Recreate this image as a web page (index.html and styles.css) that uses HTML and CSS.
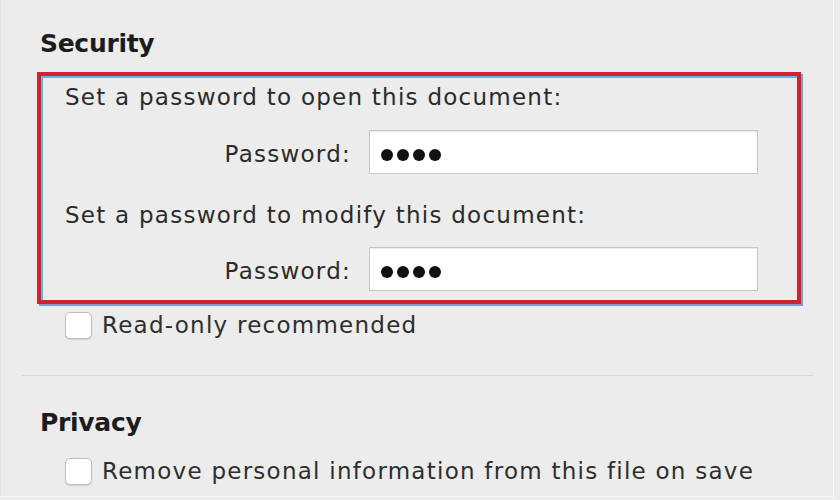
FILE: index.html
```html
<!DOCTYPE html>
<html lang="en">
<head>
<meta charset="utf-8">
<title>Security</title>
<link rel="stylesheet" href="styles.css">
</head>
<body>
<div class="window">
  <section class="section">
    <h2 class="heading">Security</h2>
    <div class="highlight">
      <p class="prompt">Set a password to open this document:</p>
      <div class="row row-first">
        <span class="label">Password:</span>
        <div class="field"><span class="dot"></span><span class="dot"></span><span class="dot"></span><span class="dot"></span></div>
      </div>
      <p class="prompt prompt-second">Set a password to modify this document:</p>
      <div class="row row-second">
        <span class="label">Password:</span>
        <div class="field"><span class="dot"></span><span class="dot"></span><span class="dot"></span><span class="dot"></span></div>
      </div>
    </div>
    <label class="check check-readonly"><span class="box"></span><span class="check-text">Read-only recommended</span></label>
  </section>
  <div class="divider"></div>
  <section class="section">
    <h2 class="heading heading-privacy">Privacy</h2>
    <label class="check check-privacy"><span class="box"></span><span class="check-text">Remove personal information from this file on save</span></label>
  </section>
</div>
</body>
</html>
```

FILE: styles.css
```css
html, body {
  margin: 0;
  padding: 0;
  background: #ececec;
}

body {
  width: 840px;
  height: 500px;
  overflow: hidden;
  font-family: "DejaVu Sans", "Liberation Sans", sans-serif;
  color: #2a2a2a;
}

.window {
  box-sizing: border-box;
  width: 834px;
  height: 497px;
  padding-top: 29px;
  border-left: 1px solid #e2e2e2;
  border-right: 1px solid #f8f8f8;
  border-bottom: 1px solid #f8f8f8;
  background: #ececec;
  overflow: hidden;
}

.section {
  padding-left: 36px;
}

.heading {
  margin: 0;
  padding-left: 3px;
  font-size: 25px;
  line-height: 30px;
  font-weight: bold;
  letter-spacing: -0.3px;
  color: #1c1c1c;
}

.highlight {
  box-sizing: border-box;
  width: 764px;
  margin-top: 13px;
  padding: 7px 39px 9px 24px;
  border: 4px solid #cc2431;
  box-shadow: inset 2px 2px 0 #64b4ea, 2px 2px 0 #7d9bd6;
}

.prompt {
  margin: 0;
  font-size: 23px;
  line-height: 28px;
  letter-spacing: 1.25px;
}

.prompt-second {
  margin-top: 27px;
}

.row {
  display: grid;
  grid-template-columns: 1fr 389px;
  column-gap: 18px;
  align-items: center;
}

.row-first {
  margin-top: 19px;
}

.row-second {
  margin-top: 18px;
}

.label {
  text-align: right;
  font-size: 23px;
  line-height: 28px;
  letter-spacing: 1.25px;
  padding-top: 4px;
}

.field {
  box-sizing: border-box;
  height: 44px;
  display: flex;
  align-items: center;
  gap: 4px;
  padding: 6px 0 0 11px;
  background: #ffffff;
  border: 1px solid #c6c6c6;
  box-shadow: inset 0 1px 0 #ececec;
}

.dot {
  width: 12px;
  height: 12px;
  border-radius: 50%;
  background: #111111;
}

.check {
  display: flex;
  align-items: center;
  gap: 10px;
  padding-left: 28px;
  font-size: 23px;
  line-height: 28px;
  letter-spacing: 1.25px;
}

.check-readonly {
  margin-top: 7px;
}

.check-privacy {
  margin-top: 19px;
}

.box {
  box-sizing: border-box;
  width: 27px;
  height: 27px;
  flex: none;
  background: #ffffff;
  border: 1px solid #bdbdbd;
  border-radius: 5px;
  box-shadow: 0 1px 1px rgba(0, 0, 0, 0.12);
}

.check-text {
  color: #2e2e2e;
}

.divider {
  height: 1px;
  margin: 36px 20px 0 21px;
  background: #d7d7d7;
}

.heading-privacy {
  margin-top: 32px;
}
```
